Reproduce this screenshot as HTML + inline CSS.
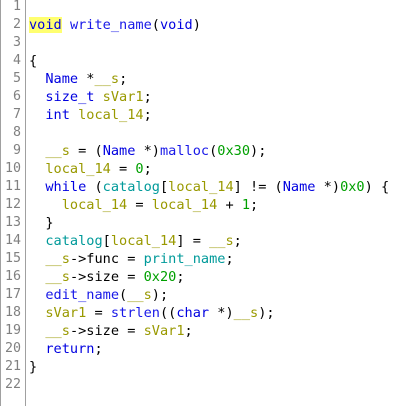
<!DOCTYPE html>
<html><head><style>
html,body{margin:0;padding:0;background:#fff;width:404px;height:406px;overflow:hidden}
.w{position:relative;width:404px;height:406px;border-left:1px solid #a0a0a0;box-sizing:border-box}
.g{position:absolute;left:0;top:-2px;width:20px;text-align:right;color:#808080;font:13.3px/18px "DejaVu Sans Mono",monospace}
.d{position:absolute;left:24px;top:0;height:409px;border-left:1px solid #a0a0a0}
pre{position:absolute;left:28px;top:-2px;margin:0;font:13.6px/18px "DejaVu Sans Mono",monospace;color:#000}
.k{color:#0000e0}.f{color:#1818e8}.v{color:#999900}.c{color:#00a000}.t{color:#009a9a}
.h{background:#ffff70}
</style></head><body><div class="w">
<div class="g">1<br>2<br>3<br>4<br>5<br>6<br>7<br>8<br>9<br>10<br>11<br>12<br>13<br>14<br>15<br>16<br>17<br>18<br>19<br>20<br>21<br>22</div>
<div class="d"></div>
<pre>&#8203;
<span class="k h">void</span> <span class="f">write_name</span>(<span class="k">void</span>)

{
  <span class="k">Name</span> *<span class="v">__s</span>;
  <span class="k">size_t</span> <span class="v">sVar1</span>;
  <span class="k">int</span> <span class="v">local_14</span>;

  <span class="v">__s</span> = (<span class="k">Name</span> *)<span class="f">malloc</span>(<span class="c">0x30</span>);
  <span class="v">local_14</span> = <span class="c">0</span>;
  <span class="k">while</span> (<span class="t">catalog</span>[<span class="v">local_14</span>] != (<span class="k">Name</span> *)<span class="c">0x0</span>) {
    <span class="v">local_14</span> = <span class="v">local_14</span> + <span class="c">1</span>;
  }
  <span class="t">catalog</span>[<span class="v">local_14</span>] = <span class="v">__s</span>;
  <span class="v">__s</span>-&gt;func = <span class="t">print_name</span>;
  <span class="v">__s</span>-&gt;size = <span class="c">0x20</span>;
  <span class="f">edit_name</span>(<span class="v">__s</span>);
  <span class="v">sVar1</span> = <span class="f">strlen</span>((<span class="k">char</span> *)<span class="v">__s</span>);
  <span class="v">__s</span>-&gt;size = <span class="v">sVar1</span>;
  <span class="k">return</span>;
}
</pre>
</div></body></html>
